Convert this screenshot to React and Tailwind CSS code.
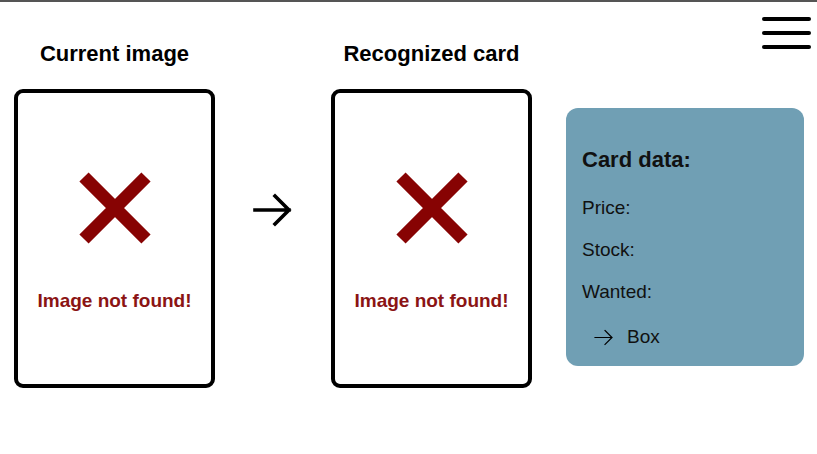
import React from "react";

const font = { fontFamily: '"Liberation Sans", Arial, sans-serif' };

const BrokenX = () => (
    <svg width="74" height="72" viewBox="0 0 74 72">
        <path d="M6 5 L68 67 M68 5 L6 67" stroke="#870303" strokeWidth="13" strokeLinecap="butt" />
    </svg>
);

const Arrow = ({ size = 40, stroke = 3 }) => (
    <svg width={size} height={size * 0.85} viewBox="0 0 40 34" fill="none">
        <path d="M2 17 H36 M22 3 L36 17 L22 31" stroke="#000" strokeWidth={stroke} strokeLinecap="square" />
    </svg>
);

const ImageCard = ({ title }) => (
    <div className="flex flex-col items-center w-[201px]">
        <h2 className="text-[22px] leading-[26px] font-bold text-black h-[26px] mt-[39px] whitespace-nowrap">{title}</h2>
        <div className="mt-[22px] w-[201px] h-[299px] border-[4px] border-black rounded-[9px] flex flex-col items-center bg-white">
            <div className="mt-[79px]">
                <BrokenX />
            </div>
            <p className="mt-[45px] text-[19px] leading-[24px] font-bold text-[#8b1414]">Image not found!</p>
        </div>
    </div>
);

const App = () => {
    return (
        <div className="relative w-[817px] h-[454px] bg-white border-t-2 border-[#555] overflow-hidden" style={font}>
            <button className="absolute top-[15px] right-[6px] w-[49px] flex flex-col gap-[10px]">
                <span className="block h-[4px] rounded-full bg-black" />
                <span className="block h-[4px] rounded-full bg-black" />
                <span className="block h-[4px] rounded-full bg-black" />
            </button>

            <div className="flex items-start pl-[14px]">
                <ImageCard title="Current image" />
                <div className="w-[116px] flex justify-center pt-[191px]">
                    <Arrow stroke={3.6} />
                </div>
                <ImageCard title="Recognized card" />

                <div className="ml-[34px] mt-[106px] w-[238px] h-[258px] rounded-[12px] bg-[#709fb4] pl-[16px] pt-[39px] text-[#111]">
                    <h3 className="text-[22px] leading-[26px] font-bold">Card data:</h3>
                    <div className="mt-[24px] flex flex-col gap-[20px] text-[19px] leading-[22px]">
                        <span>Price:</span>
                        <span>Stock:</span>
                        <span>Wanted:</span>
                    </div>
                    <div className="mt-[23px] ml-[12px] flex items-center gap-[13px] text-[19px] leading-[22px]">
                        <Arrow size={20} stroke={2.4} />
                        <span>Box</span>
                    </div>
                </div>
            </div>
        </div>
    );
};

export default App;
